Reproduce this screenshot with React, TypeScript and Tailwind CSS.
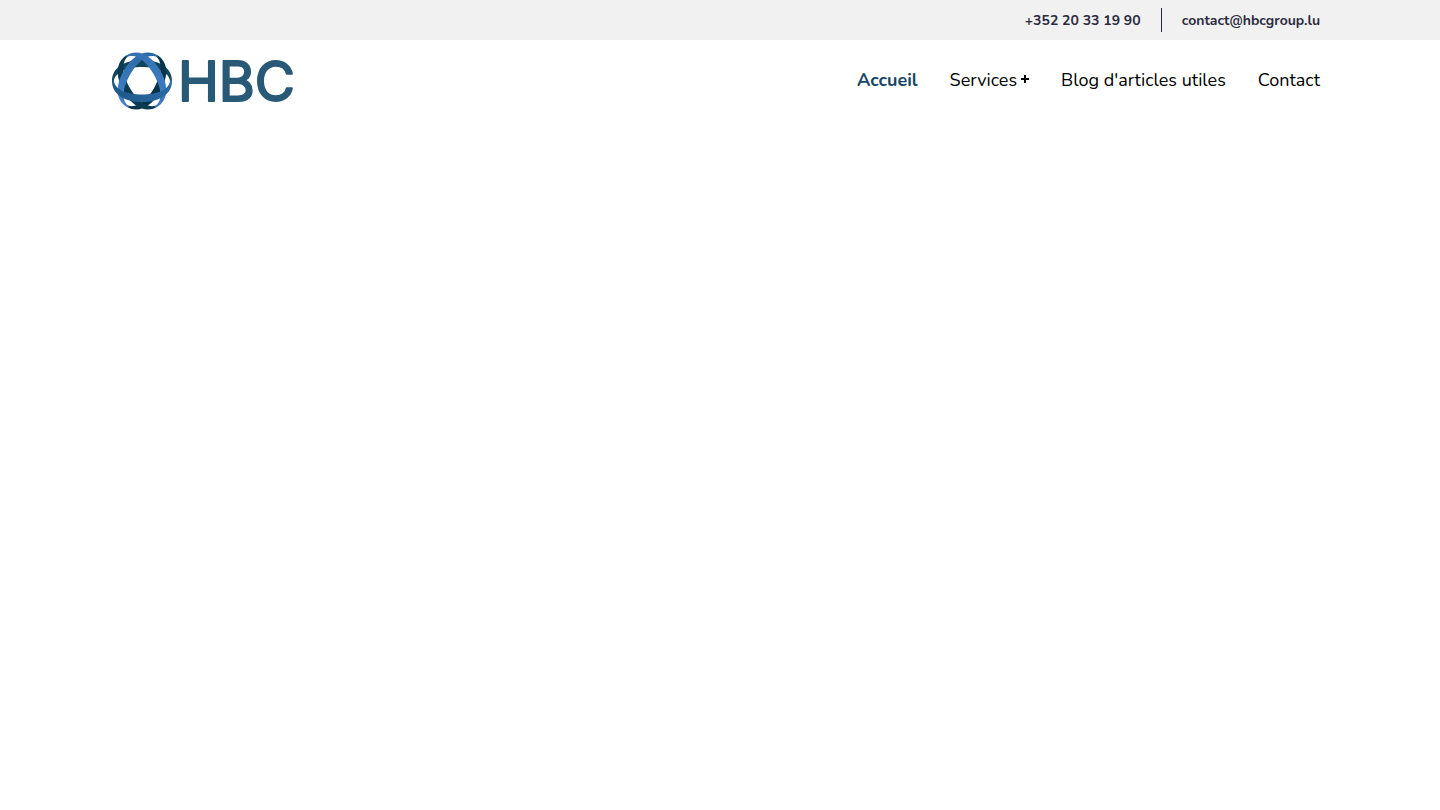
import clsx from "clsx";

const navItems = [
  { label: "Accueil", href: "#accueil", active: true },
  { label: "Services", href: "#services", hasMenu: true },
  { label: "Blog d'articles utiles", href: "#blog" },
  { label: "Contact", href: "#contact" },
];

const FRONT_HALF =
  "M-30 0C-30 13-18 21 0 21S30 13 30 0L28.5 -2C28 9 15 13.5 0 13.5S-28 9-28.5 -2Z";
const BACK_HALF =
  "M-30 0C-30 -13-18 -21 0 -21S30 -13 30 0L28.5 2C28 -9 15 -14 0 -14S-28 -9-28.5 2Z";

function Logo() {
  return (
    <svg width="188" height="60" viewBox="0 0 188 60" role="img" aria-label="HBC" className="overflow-visible">
      <defs>
        <linearGradient id="band" x1="0" x2="1" y1="0" y2="0">
          <stop offset="0" stopColor="#2868a4" />
          <stop offset="1" stopColor="#4480c6" />
        </linearGradient>
        <linearGradient id="band-right" x1="0" x2="1" y1="0" y2="0">
          <stop offset="0" stopColor="#3f7cc2" />
          <stop offset="1" stopColor="#3371b2" />
        </linearGradient>
        <linearGradient id="base" x1="0" x2="1" y1="0" y2="0">
          <stop offset="0" stopColor="#1d5786" />
          <stop offset="1" stopColor="#2b6ba6" />
        </linearGradient>
      </defs>
      <g transform="translate(30 31)">
        <path d={BACK_HALF} fill="#10465c" />
        <path d={BACK_HALF} fill="#07334a" transform="rotate(120)" />
        <path d={BACK_HALF} fill="#0a3b52" transform="rotate(240)" />
        <path d={FRONT_HALF} fill="url(#band)" transform="rotate(120)" />
        <path d={FRONT_HALF} fill="url(#band-right)" transform="rotate(240)" />
        <path d={FRONT_HALF} fill="url(#base)" />
      </g>
      <text
        x="66"
        y="51"
        fill="#285a77"
        stroke="#285a77"
        strokeWidth="2"
        strokeLinejoin="round"
        className="font-['Inter',sans-serif] text-[55px] font-normal"
      >
        HBC
      </text>
    </svg>
  );
}

export default function App() {
  return (
    <div className="min-h-screen bg-white font-['Nunito','Lato',sans-serif]">
      <div className="bg-[#f1f1f1]">
        <div className="flex h-10 items-center justify-end gap-5 px-30 text-sm leading-normal font-bold text-[#2b2b40]">
          <a href="tel:+35220331990">+352 20 33 19 90</a>
          <div className="h-6 w-px bg-[#2b2b40]" />
          <a href="mailto:contact@hbcgroup.lu">contact@hbcgroup.lu</a>
        </div>
      </div>

      <header className="flex h-20 items-center justify-between pr-30 pl-28">
        <a href="#accueil">
          <Logo />
        </a>
        <nav>
          <ul className="flex items-center gap-8 text-lg text-black">
            {navItems.map((item) => (
              <li key={item.label}>
                <a
                  href={item.href}
                  className={clsx("flex items-center gap-1", item.active && "font-bold text-[#194666]")}
                >
                  {item.label}
                  {item.hasMenu && (
                    <svg width="8" height="10" viewBox="0 0 8 10" aria-hidden="true">
                      <path d="M4 0v8M0 4h8" stroke="currentColor" strokeWidth="2" />
                    </svg>
                  )}
                </a>
              </li>
            ))}
          </ul>
        </nav>
      </header>
    </div>
  );
}
